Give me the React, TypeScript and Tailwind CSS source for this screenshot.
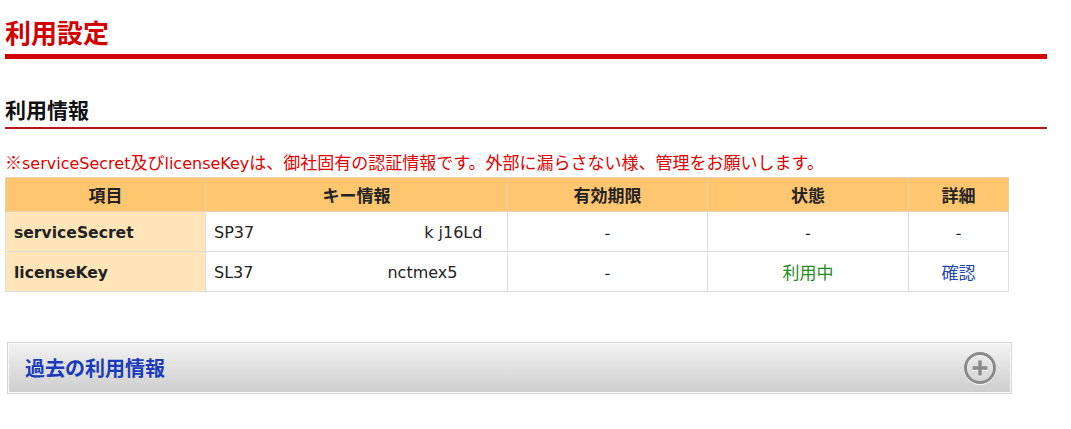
import React from "react";

const CJK = "font-['Noto_Sans_CJK_JP',sans-serif]";
const LAT = "font-['DejaVu_Sans','Noto_Sans_CJK_JP',sans-serif] text-[16px]";

function PlusIcon() {
  return (
    <svg width="36" height="36" viewBox="0 0 36 36">
      <circle cx="18" cy="19" r="14.5" fill="none" stroke="#ffffff" strokeWidth="3" opacity="0.8" />
      <circle cx="18" cy="18" r="14.5" fill="none" stroke="#8a8a8a" strokeWidth="3" />
      <path d="M18 10.5v15M10.5 18h15" stroke="#ffffff" strokeWidth="3.5" opacity="0.8" transform="translate(0 1)" />
      <path d="M18 10.5v15M10.5 18h15" stroke="#8a8a8a" strokeWidth="3.5" />
    </svg>
  );
}

export default function App() {
  const th = "border border-[#e2d2b5] bg-[#ffc670] font-bold text-[17px] text-[#222] text-center align-middle h-[34px] p-0";
  const td = "border border-[#dddddd] h-[40px] p-0 align-middle text-[17px]";
  const dark = "text-[#222]";
  return (
    <div className={`${CJK} bg-white w-[1071px] min-h-[429px] pl-[5px] pt-[19px]`}>
      <div className="w-[1042px]">
        <h1 className="text-[26px] leading-[26px] font-bold text-[#d20000]">利用設定</h1>
        <div className="mt-[9px] h-[5px] bg-[#d40000]" />
        <h2 className="mt-[40px] text-[21px] leading-[21px] font-bold text-[#111]">利用情報</h2>
        <div className="mt-[7px] h-[2px] bg-[#b8161c]" />
        <p className="mt-[24px] text-[17px] leading-[17px] text-[#e20000] whitespace-nowrap">
          ※<span className={LAT}>serviceSecret</span>及び<span className={LAT}>licenseKey</span>は、御社固有の認証情報です。外部に漏らさない様、管理をお願いします。
        </p>
      </div>
      <table className="mt-[5px] w-[1003px] border-collapse table-fixed">
        <colgroup>
          <col className="w-[200px]" />
          <col className="w-[302px]" />
          <col className="w-[200px]" />
          <col className="w-[201px]" />
          <col className="w-[100px]" />
        </colgroup>
        <thead>
          <tr>
            <th className={th}>項目</th>
            <th className={th}>キー情報</th>
            <th className={th}>有効期限</th>
            <th className={th}>状態</th>
            <th className={th}>詳細</th>
          </tr>
        </thead>
        <tbody>
          <tr>
            <td className={`${td} ${dark} bg-[#ffe5b8] pl-[8px]`}>
              <span className="font-['DejaVu_Sans',sans-serif] font-bold text-[15.6px]">serviceSecret</span>
            </td>
            <td className={`${td} ${dark} pl-[8px] whitespace-nowrap`}>
              <span className="font-['DejaVu_Sans',sans-serif] text-[16px]">
                SP37<span className="inline-block w-[170px]" />k j16Ld
              </span>
            </td>
            <td className={`${td} ${dark} text-center`}>-</td>
            <td className={`${td} ${dark} text-center`}>-</td>
            <td className={`${td} ${dark} text-center`}>-</td>
          </tr>
          <tr>
            <td className={`${td} ${dark} bg-[#ffe5b8] pl-[8px]`}>
              <span className="font-['DejaVu_Sans',sans-serif] font-bold text-[15.6px]">licenseKey</span>
            </td>
            <td className={`${td} ${dark} pl-[8px] whitespace-nowrap`}>
              <span className="font-['DejaVu_Sans',sans-serif] text-[16px]">
                SL37<span className="inline-block w-[134px]" />nctmex5
              </span>
            </td>
            <td className={`${td} ${dark} text-center`}>-</td>
            <td className={`${td} text-center text-[#228b22]`}>利用中</td>
            <td className={`${td} text-center text-[#1d48b0]`}>確認</td>
          </tr>
        </tbody>
      </table>
      <div className="mt-[50px] ml-[2px] w-[1005px] h-[52px] border border-[#d6d6d6] shadow-[inset_0_0_0_1px_#f8f8f8] bg-gradient-to-b from-[#f3f3f3] to-[#cdcdcd] flex items-center justify-between pl-[17px] pr-[13px]">
        <span className="text-[20px] font-bold text-[#1a3cbc] leading-none">過去の利用情報</span>
        <PlusIcon />
      </div>
    </div>
  );
}
